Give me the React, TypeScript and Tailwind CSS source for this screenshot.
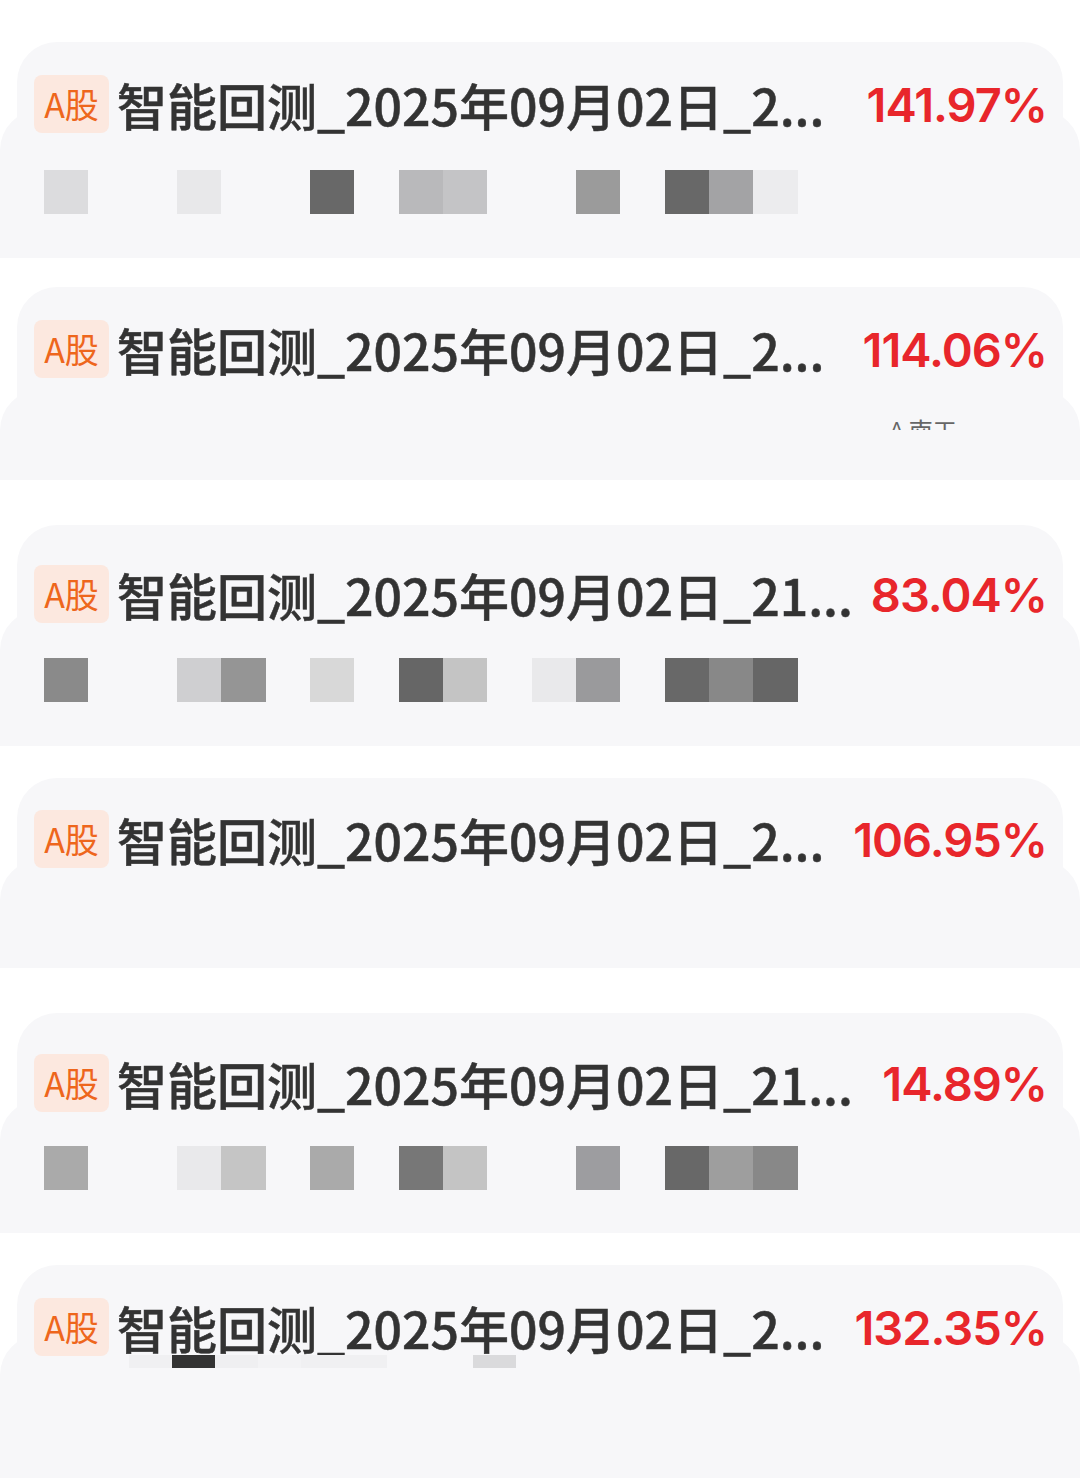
import React from 'react';

type Card = {
  mt: string;
  upperH: string;
  upperPt: string;
  lowerH: string;
  lowerPt: string;
  tail: string;
  pct: string;
  mosaic?: string[];
  extra?: 'hint' | 'strip';
};

// mosaic cells: '' = empty slot
const cards: Card[] = [
  {
    mt: 'mt-[42px]', upperH: 'h-[108px]', upperPt: 'pt-[33px]', lowerH: 'h-[148px]', lowerPt: 'pt-[60px]',
    tail: '2', pct: '141.97%',
    mosaic: ['#dcdcde', '', '', '#e8e8ea', '', '', '#686868', '', '#b9b9bb', '#c4c4c6', '', '', '#9b9b9b', '', '#686868', '#a3a3a5', '#ececee'],
  },
  {
    mt: 'mt-[29px]', upperH: 'h-[143px]', upperPt: 'pt-[33px]', lowerH: 'h-[90px]', lowerPt: 'pt-[26px]',
    tail: '2', pct: '114.06%', extra: 'hint',
  },
  {
    mt: 'mt-[45px]', upperH: 'h-[125px]', upperPt: 'pt-[40px]', lowerH: 'h-[136px]', lowerPt: 'pt-[48px]',
    tail: '21', pct: '83.04%',
    mosaic: ['#8a8a8a', '', '', '#cfcfd1', '#959595', '', '#d8d8d8', '', '#666666', '#c4c4c4', '', '#e9e9eb', '#9a9a9c', '', '#686868', '#888888', '#666666'],
  },
  {
    mt: 'mt-[32px]', upperH: 'h-[122px]', upperPt: 'pt-[32px]', lowerH: 'h-[108px]', lowerPt: 'pt-[20px]',
    tail: '2', pct: '106.95%',
  },
  {
    mt: 'mt-[45px]', upperH: 'h-[127px]', upperPt: 'pt-[41px]', lowerH: 'h-[133px]', lowerPt: 'pt-[46px]',
    tail: '21', pct: '14.89%',
    mosaic: ['#aaaaaa', '', '', '#e9e9eb', '#c5c5c5', '', '#aaaaaa', '', '#777777', '#c4c4c4', '', '', '#9d9da0', '', '#686868', '#9e9e9e', '#888888'],
  },
  {
    mt: 'mt-[32px]', upperH: 'h-[110px]', upperPt: 'pt-[33px]', lowerH: 'h-[143px]', lowerPt: 'pt-[20px]',
    tail: '2', pct: '132.35%', extra: 'strip',
  },
];

const stripCells = ['#f0f0f2', '#333333', '#efeff1', '#f3f3f5', '#f0f0f2', '#f0f0f2', '', '', '#dadadc'];

function TitleRow({ tail, pct }: { tail: string; pct: string }) {
  return (
    <div className="flex items-center pl-[17px] pr-[16px]">
      <div className="flex h-[58px] w-[75px] shrink-0 items-center justify-center rounded-[8px] bg-[#fce8df] text-[34px] leading-none text-[#ee661c] [font-family:'Noto_Sans_CJK_SC',sans-serif]">
        A股
      </div>
      <div className="ml-[8px] whitespace-nowrap text-[50px] leading-none font-medium text-[#333333] [-webkit-text-stroke:0.5px_#333333] [font-family:'Noto_Sans_CJK_SC',sans-serif]">
        智能回测_2025年09月02日_{tail}...
      </div>
      <div className="ml-auto whitespace-nowrap text-[47px] leading-none font-semibold tracking-[-1px] text-[#e8262b] [font-family:Inter,sans-serif]">
        {pct}
      </div>
    </div>
  );
}

function Mosaic({ cells }: { cells: string[] }) {
  return (
    <div className="flex pl-[44px]">
      {cells.map((c, i) => (
        <div
          key={i}
          className="h-[44px] w-[44.33px]"
          style={{ backgroundColor: c || 'transparent' }}
        />
      ))}
    </div>
  );
}

export default function App() {
  return (
    <div className="min-h-[1478px] w-[1080px] overflow-hidden bg-white">
      {cards.map((card, i) => (
        <div key={i} className={card.mt}>
          <div className={`relative z-10 mx-[17px] rounded-t-[40px] bg-[#f7f7f9] ${card.upperH} ${card.upperPt}`}>
            <TitleRow tail={card.tail} pct={card.pct} />
            {card.extra === 'strip' && (
              <div className="-mt-[1px] flex pl-[112px]">
                {stripCells.map((c, j) => (
                  <div key={j} className="h-[13px] w-[43px]" style={{ backgroundColor: c || 'transparent' }} />
                ))}
              </div>
            )}
          </div>
          <div className={`relative -mt-[40px] rounded-t-[40px] bg-[#f7f7f9] ${card.lowerH} ${card.lowerPt}`}>
            <div className="relative z-20">
              {card.mosaic && <Mosaic cells={card.mosaic} />}
              {card.extra === 'hint' && (
                <div className="ml-[890px] h-[14px] overflow-hidden text-[24px] leading-[28px] text-[#666666] [font-family:'Noto_Sans_CJK_SC',sans-serif]">
                  ^ 南工
                </div>
              )}
            </div>
          </div>
        </div>
      ))}
    </div>
  );
}
